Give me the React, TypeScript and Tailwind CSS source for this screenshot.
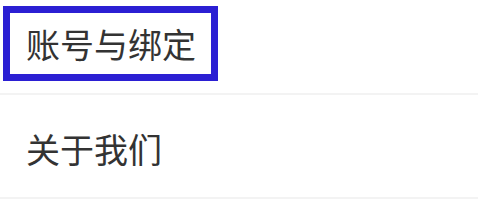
const font = { fontFamily: '"Noto Sans CJK SC", "Noto Sans", sans-serif' };

export default function App() {
  return (
    <div className="h-[223px] w-[478px] overflow-hidden bg-white" style={font}>
      <div className="h-[93px] pl-[3px] pt-[6px]">
        <span className="inline-block border-[7px] border-[#2b1fd3] pl-[16px] pr-[15px] py-[13px] text-[34px] leading-[35px] text-[#333333]">
          账号与绑定
        </span>
      </div>
      <div className="h-[2px] bg-[#f3f3f3]" />
      <div className="flex h-[102px] items-center pl-[26px] pt-[4px] text-[34px] leading-[35px] text-[#333333]">
        关于我们
      </div>
      <div className="h-[2px] bg-[#f3f3f3]" />
    </div>
  );
}
